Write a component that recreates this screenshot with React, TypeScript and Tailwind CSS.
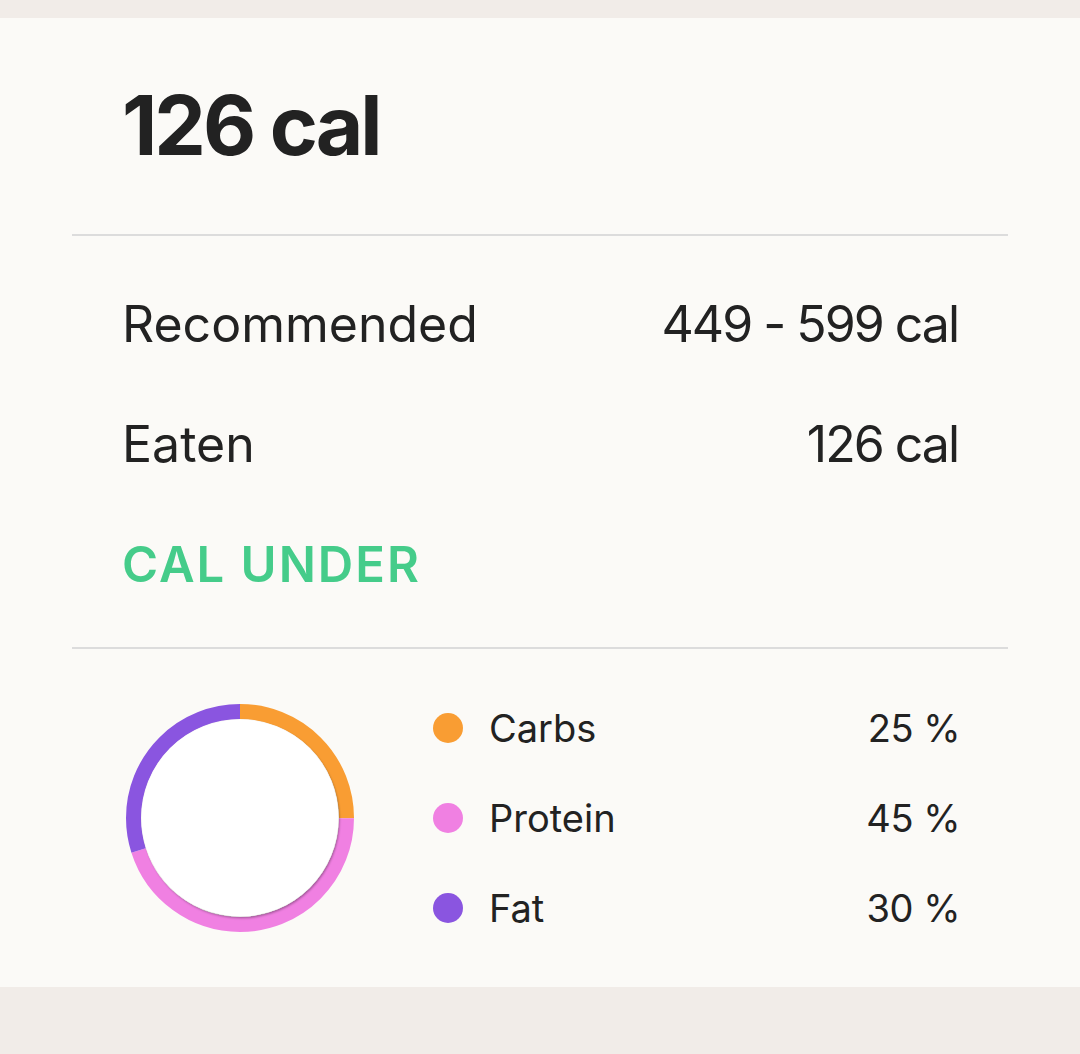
import React from "react";

const font = { fontFamily: "Inter, 'Noto Sans', sans-serif" };

function Donut() {
  const cx = 118;
  const cy = 118;
  const r = 106.5;
  const c = 2 * Math.PI * r;
  const segs = [
    { color: "#f99d33", from: 0, pct: 0.25 },
    { color: "#f080e2", from: 0.25, pct: 0.45 },
    { color: "#8a55e0", from: 0.7, pct: 0.3 },
  ];
  return (
    <svg width="236" height="236" viewBox="0 0 236 236">
      <defs>
        <filter id="sh" x="-20%" y="-20%" width="140%" height="140%">
          <feDropShadow dx="1" dy="1.5" stdDeviation="1" floodColor="#000" floodOpacity="0.35" />
        </filter>
      </defs>
      {segs.map((s) => (
        <circle
          key={s.color}
          cx={cx}
          cy={cy}
          r={r}
          fill="none"
          stroke={s.color}
          strokeWidth={15}
          strokeDasharray={`${s.pct * c} ${c}`}
          strokeDashoffset={-s.from * c}
          transform={`rotate(-90 ${cx} ${cy})`}
        />
      ))}
      <circle cx={cx} cy={cy} r={98.5} fill="#ffffff" filter="url(#sh)" />
    </svg>
  );
}

function Legend({ color, label, value }: { color: string; label: string; value: string }) {
  return (
    <div className="flex h-[90px] items-center">
      <span className="h-[30px] w-[30px] rounded-full" style={{ backgroundColor: color }} />
      <span className="ml-[26px] text-[38px] text-[#222222]">{label}</span>
      <span className="ml-auto text-[38px] tracking-[-0.5px] text-[#222222]">{value}</span>
    </div>
  );
}

export default function App() {
  return (
    <div className="min-h-[1054px] bg-[#f1ece8]" style={font}>
      <div className="h-[18px]" />
      <div className="h-[969px] bg-[#fbfaf7] px-[72px]">
        <div className="flex h-[216px] items-center px-[50px]">
          <span className="text-[82px] font-bold leading-none tracking-[-3px] text-[#222222]">126 cal</span>
        </div>
        <div className="h-[2px] bg-[#dcdcdc]" />
        <div className="px-[50px] pt-[28px] pb-[23px]">
          <div className="flex h-[120px] items-center justify-between text-[50px] leading-none text-[#222222]">
            <span>Recommended</span>
            <span className="tracking-[-2px]">449 - 599 cal</span>
          </div>
          <div className="flex h-[120px] items-center justify-between text-[50px] leading-none text-[#222222]">
            <span>Eaten</span>
            <span className="tracking-[-2px]">126 cal</span>
          </div>
          <div className="flex h-[120px] items-center text-[49px] font-semibold leading-none tracking-[2px] text-[#45cc8a]">
            <span>CAL UNDER</span>
          </div>
        </div>
        <div className="h-[2px] bg-[#dcdcdc]" />
        <div className="flex h-[338px] items-center pl-[50px] pr-[48px]">
          <Donut />
          <div className="ml-[75px] flex-1">
            <Legend color="#f99d33" label="Carbs" value="25 %" />
            <Legend color="#f080e2" label="Protein" value="45 %" />
            <Legend color="#8a55e0" label="Fat" value="30 %" />
          </div>
        </div>
      </div>
    </div>
  );
}
